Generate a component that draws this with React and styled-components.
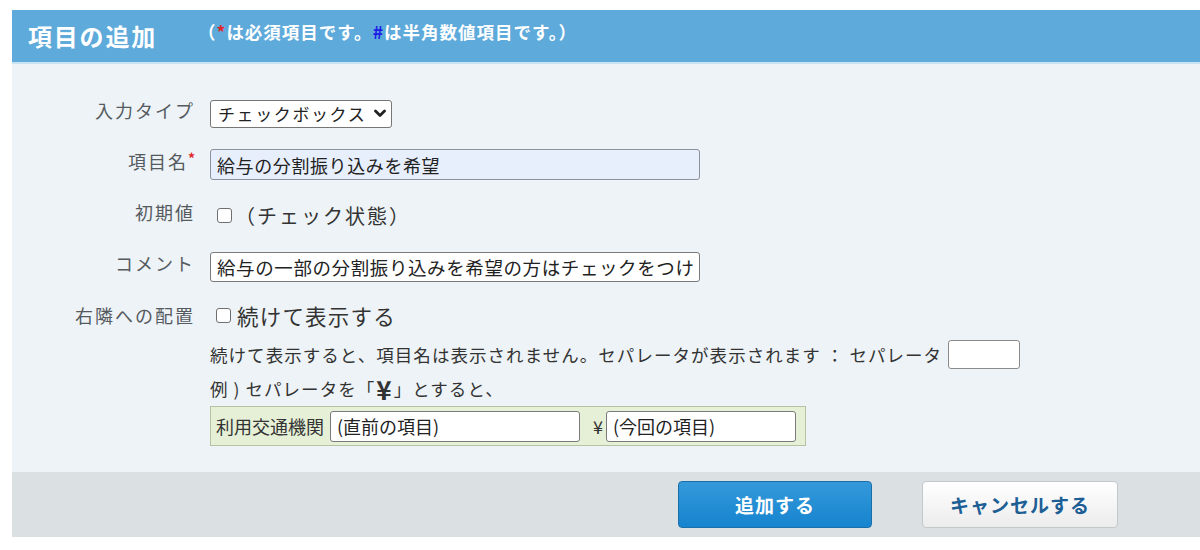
import React from "react";
import styled, { createGlobalStyle } from "styled-components";

const GlobalStyle = createGlobalStyle`
  html, body {
    margin: 0;
    padding: 0;
    background: #ffffff;
  }
  body {
    font-family: "Noto Sans CJK JP", "Noto Sans", sans-serif;
  }
`;

const Page = styled.div`
  width: 1188px;
  margin: 10px 0 0 12px;
`;

const Header = styled.div`
  height: 52px;
  background: #5eaadb;
  border-bottom: 2px solid #c9e3f3;
  display: flex;
  align-items: center;
  padding-left: 16px;
  color: #fff;
`;

const Title = styled.h1`
  margin: 0;
  font-size: 24px;
  font-weight: 700;
  letter-spacing: 1.8px;
  line-height: 1;
  width: 170px;
`;

const Note = styled.span`
  font-size: 17.5px;
  font-weight: 700;
  letter-spacing: 1px;
  line-height: 1;
  margin-top: -9px;
`;

const Mark = styled.span`
  color: ${({ tone }) => tone};
`;

const Body = styled.div`
  background: #eef3f7;
  padding: 24px 0 26px;
`;

const Row = styled.div`
  display: flex;
  align-items: ${({ top }) => (top ? "flex-start" : "center")};
  min-height: ${({ h }) => h || 51}px;
`;

const Label = styled.div`
  width: 183px;
  flex: none;
  text-align: right;
  font-size: 18px;
  letter-spacing: 2px;
  color: #555a60;
  padding-bottom: 8px;
  margin-right: 15px;
  line-height: ${({ lh }) => (lh ? `${lh}px` : "normal")};
`;

const Req = styled.span`
  color: #e0262b;
  font-weight: 700;
  font-size: 14px;
  vertical-align: top;
  letter-spacing: 0;
`;

const SelectWrap = styled.div`
  position: relative;
  width: 182px;
  height: 28px;
`;

const Select = styled.select`
  appearance: none;
  width: 100%;
  height: 100%;
  box-sizing: border-box;
  border: 1px solid #767676;
  border-radius: 3px;
  background: #fff;
  font-family: inherit;
  font-size: 17px;
  letter-spacing: 1.6px;
  color: #222;
  padding: 0 20px 0 7px;
  outline: none;
`;

const Chevron = styled.svg`
  position: absolute;
  right: 6px;
  top: 9px;
  pointer-events: none;
`;

const TextInput = styled.input`
  box-sizing: border-box;
  width: ${({ w }) => w}px;
  height: ${({ h }) => h}px;
  border: 1px solid ${({ filled }) => (filled ? "#8c919a" : "#7a7a7a")};
  border-radius: 3px;
  background: ${({ filled }) => (filled ? "#e8effc" : "#fff")};
  font-family: inherit;
  font-size: ${({ fs }) => fs || 18}px;
  letter-spacing: ${({ ls }) => ls ?? 0.6}px;
  color: #222;
  padding: 0 6px;
  outline: none;
`;

const Check = styled.input.attrs({ type: "checkbox" })`
  appearance: none;
  width: 15px;
  height: 15px;
  margin: 0 ${({ gap }) => gap}px 0 ${({ lead }) => lead}px;
  border: 1px solid #6f6f6f;
  border-radius: 3px;
  background: #fff;
  flex: none;
`;

const CheckLine = styled.label`
  display: flex;
  align-items: center;
  font-size: ${({ fs }) => fs}px;
  letter-spacing: ${({ ls }) => ls}px;
  color: #333;
`;

const Field = styled.div`
  display: flex;
  flex-direction: column;
`;

const Line = styled.div`
  display: flex;
  align-items: center;
  height: ${({ h }) => h}px;
  font-size: 17.5px;
  letter-spacing: 1.05px;
  color: #333;
  white-space: nowrap;
`;

const SepInput = styled.input`
  box-sizing: border-box;
  width: 72px;
  height: 29px;
  margin-left: 6px;
  border: 1px solid #8a8a8a;
  border-radius: 3px;
  background: #fff;
  outline: none;
`;

const Yen = styled.b`
  font-size: 26px;
  margin: 0 1px;
`;

const Sample = styled.div`
  box-sizing: border-box;
  width: 596px;
  height: 40px;
  display: flex;
  align-items: center;
  padding: 0 6px 0 5px;
  background: #e6f0d6;
  border: 1px solid #b7c2a2;
  font-size: 18px;
  color: #333;
`;

const SampleName = styled.span`
  margin-right: 6px;
`;

const SampleYen = styled.span`
  margin: 0 3px 0 13px;
`;

const Footer = styled.div`
  height: 65px;
  background: #dbe0e3;
  display: flex;
  align-items: center;
  justify-content: flex-end;
  gap: 50px;
  padding-right: 82px;
`;

const Button = styled.button`
  box-sizing: border-box;
  width: ${({ w }) => w}px;
  height: 47px;
  border-radius: 4px;
  font-family: inherit;
  font-size: 19px;
  font-weight: 700;
  letter-spacing: 1px;
  cursor: pointer;
  border: 1px solid ${({ primary }) => (primary ? "#1b6fa9" : "#c3c8cb")};
  color: ${({ primary }) => (primary ? "#fff" : "#1d5f95")};
  background: ${({ primary }) =>
    primary
      ? "linear-gradient(#3499da, #1684cf)"
      : "linear-gradient(#ffffff, #ececec)"};
`;

export default function App() {
  return (
    <>
      <GlobalStyle />
      <Page>
        <Header>
          <Title>項目の追加</Title>
          <Note>
            （<Mark tone="#e0262b">*</Mark>は必須項目です。
            <Mark tone="#1c1ce6">#</Mark>は半角数値項目です。）
          </Note>
        </Header>
        <Body>
          <Row>
            <Label>入力タイプ</Label>
            <SelectWrap>
              <Select defaultValue="checkbox">
                <option value="checkbox">チェックボックス</option>
              </Select>
              <Chevron width="12" height="9" viewBox="0 0 12 9">
                <path d="M1.5 2 L6 6.5 L10.5 2" fill="none" stroke="#222" strokeWidth="2.8" strokeLinecap="round" strokeLinejoin="round" />
              </Chevron>
            </SelectWrap>
          </Row>
          <Row>
            <Label>
              項目名<Req>*</Req>
            </Label>
            <TextInput filled w={490} h={31} defaultValue="給与の分割振り込みを希望" />
          </Row>
          <Row>
            <Label>初期値</Label>
            <CheckLine fs={20} ls={2}>
              <Check lead={7} gap={3} />
              （チェック状態）
            </CheckLine>
          </Row>
          <Row>
            <Label>コメント</Label>
            <TextInput w={490} h={30} fs={18.5} ls={0.6} defaultValue="給与の一部の分割振り込みを希望の方はチェックをつけてください" />
          </Row>
          <Row top>
            <Label lh={46}>右隣への配置</Label>
            <Field>
              <Line h={46}>
                <CheckLine fs={21.5} ls={1.2}>
                  <Check lead={6} gap={6} />
                  続けて表示する
                </CheckLine>
              </Line>
              <Line h={32}>
                続けて表示すると、項目名は表示されません。セパレータが表示されます ： セパレータ
                <SepInput />
              </Line>
              <Line h={36}>
                例 ) セパレータを「<Yen>¥</Yen>」とすると、
              </Line>
              <Sample>
                <SampleName>利用交通機関</SampleName>
                <TextInput w={250} h={31} fs={18} ls={0} defaultValue="(直前の項目)" />
                <SampleYen>¥</SampleYen>
                <TextInput w={190} h={31} fs={18} ls={0} defaultValue="(今回の項目)" />
              </Sample>
            </Field>
          </Row>
        </Body>
        <Footer>
          <Button primary w={194}>追加する</Button>
          <Button w={196}>キャンセルする</Button>
        </Footer>
      </Page>
    </>
  );
}
